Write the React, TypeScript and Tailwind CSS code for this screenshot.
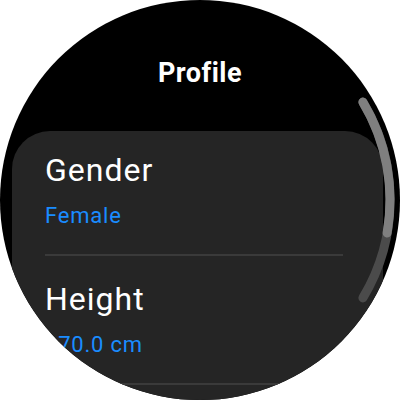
const font = { fontFamily: 'Roboto, "Noto Sans", sans-serif' }

function Item({ label, value, top }: { label: string; value: string; top: string }) {
  return (
    <div className={`flex flex-col px-[33px] ${top}`}>
      <span className="text-[32px] leading-none tracking-[1px] text-white">{label}</span>
      <span className="mt-[19px] text-[22px] leading-none tracking-[0.8px] text-[#1a8cff]">{value}</span>
      <div className="mt-[27px] h-[2px] w-[298px] bg-[#3a3a3a]" />
    </div>
  )
}

export default function App() {
  return (
    <div className="w-[400px] h-[400px] bg-white" style={font}>
      <div className="relative w-[400px] h-[400px] rounded-full overflow-hidden bg-black">
        <div className="flex flex-col">
          <div className="pt-[60px] text-center text-[27px] leading-none font-bold text-white tracking-[0.5px]">
            Profile
          </div>
          <div className="mt-[44px] ml-[12px] w-[371px] h-[320px] rounded-[38px] bg-[#252525]">
            <Item label="Gender" value="Female" top="pt-[23px]" />
            <Item label="Height" value="170.0 cm" top="pt-[27px]" />
          </div>
        </div>

        {/* scroll indicator */}
        <svg className="absolute inset-0" width="400" height="400" viewBox="0 0 400 400" fill="none">
          <path d="M362.9 102.1 A190 190 0 0 1 362.9 297.9" stroke="#4b4b4b" strokeWidth="9" strokeLinecap="round" />
          <path d="M362.9 102.1 A190 190 0 0 1 387.1 233" stroke="#7f7f7f" strokeWidth="9" strokeLinecap="round" />
        </svg>
      </div>
    </div>
  )
}
